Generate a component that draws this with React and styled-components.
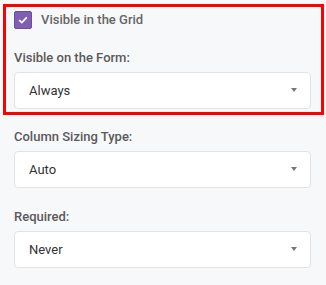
import React from 'react';
import styled, { createGlobalStyle } from 'styled-components';

const GlobalStyle = createGlobalStyle`
  body {
    margin: 0;
    background: #f7f8fa;
    font-family: Roboto, "Liberation Sans", Arial, sans-serif;
  }
`;

const Page = styled.div`
  width: 326px;
  height: 285px;
  background: #f7f8fa;
  padding-top: 4px;
  box-sizing: border-box;
`;

const Highlight = styled.div`
  margin: 0 2px 0 3px;
  border: 3px solid #ff0000;
  padding: 4px 10px 3px 8px;
`;

const CheckRow = styled.label`
  display: flex;
  align-items: center;
  gap: 9px;
  height: 18px;
`;

const Box = styled.span`
  width: 18px;
  height: 18px;
  box-sizing: border-box;
  border-radius: 2px;
  background: #7e5fb2;
  border: 1px solid #6b4da0;
  display: flex;
  align-items: center;
  justify-content: center;
`;

const CheckText = styled.span`
  font-size: 13px;
  font-weight: 500;
  color: #666;
  line-height: 16px;
`;

const Fields = styled.div`
  padding: 0 15px 0 14px;
`;

const Field = styled.div`
  margin-top: ${(p) => p.$top}px;
`;

const Label = styled.div`
  font-size: 13px;
  font-weight: 500;
  line-height: 16px;
  color: #5a5a5a;
  margin-bottom: 6px;
`;

const Select = styled.div`
  height: 37px;
  box-sizing: border-box;
  background: #fff;
  border: 1px solid #e3e3e3;
  border-radius: 4px;
  display: flex;
  align-items: center;
  justify-content: space-between;
  padding: 0 13px 0 14px;
  font-size: 13px;
  color: #333;
`;

const Arrow = styled.span`
  width: 0;
  height: 0;
  border-left: 3.5px solid transparent;
  border-right: 3.5px solid transparent;
  border-top: 4px solid #777;
  margin-top: -1px;
`;

const SelectField = ({ label, value, top }) => (
  <Field $top={top}>
    <Label>{label}</Label>
    <Select>
      <span>{value}</span>
      <Arrow />
    </Select>
  </Field>
);

export default function App() {
  return (
    <>
      <GlobalStyle />
      <Page>
        <Highlight>
          <CheckRow>
            <Box>
              <svg width="10" height="8" viewBox="0 0 10 8">
                <path d="M1.2 4.2 L3.8 6.6 L8.8 1.4" fill="none" stroke="#fff" strokeWidth="1.8" />
              </svg>
            </Box>
            <CheckText>Visible in the Grid</CheckText>
          </CheckRow>
          <SelectField label="Visible on the Form:" value="Always" top={21} />
        </Highlight>
        <Fields>
          <SelectField label="Column Sizing Type:" value="Auto" top={14} />
          <SelectField label="Required:" value="Never" top={21} />
        </Fields>
      </Page>
    </>
  );
}
